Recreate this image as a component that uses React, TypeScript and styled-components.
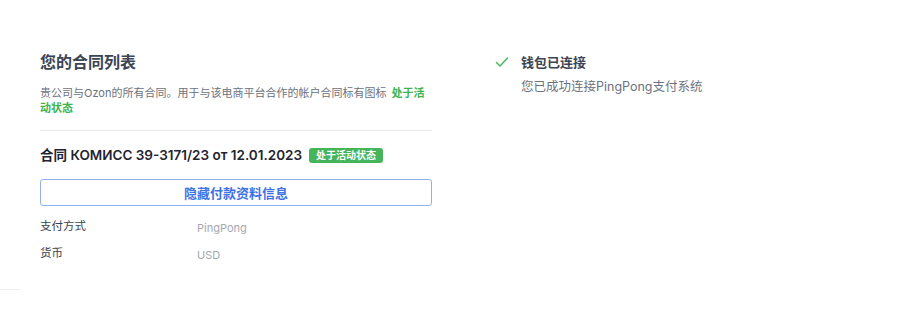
import styled, { createGlobalStyle } from "styled-components";

const GlobalStyle = createGlobalStyle`
    body {
        margin: 0;
        background: #ffffff;
        font-family: Inter, "Noto Sans CJK SC", sans-serif;
    }
`;

const Page = styled.div`
    width: 913px;
    height: 315px;
    display: flex;
    flex-direction: column;
`;

const Columns = styled.div`
    display: flex;
    gap: 63px;
    padding: 52px 0 0 40px;
`;

const LeftColumn = styled.section`
    width: 392px;
    display: flex;
    flex-direction: column;
`;

const Title = styled.h2`
    margin: 0;
    font-size: 16px;
    line-height: 20px;
    font-weight: 700;
    color: #3b4452;
`;

const Description = styled.p`
    margin: 14px 0 0;
    font-size: 11px;
    line-height: 15px;
    color: #6b7280;
`;

const ActiveText = styled.span`
    color: #3fb34f;
    font-weight: 600;
    margin-left: 5px;
`;

const Divider = styled.hr`
    margin: 14px 0 0;
    border: none;
    border-top: 1px solid #e6e8ec;
`;

const ContractHeader = styled.div`
    display: flex;
    align-items: center;
    gap: 7px;
    margin-top: 15px;
`;

const ContractTitle = styled.h3`
    margin: 0;
    font-size: 13.5px;
    line-height: 18px;
    font-weight: 600;
    color: #1f2430;
`;

const Badge = styled.span`
    background: #45b45a;
    color: #ffffff;
    font-size: 10px;
    font-weight: 600;
    line-height: 15px;
    padding: 0 7px;
    border-radius: 3px;
`;

const ToggleButton = styled.button`
    margin-top: 15px;
    height: 27px;
    width: 100%;
    background: #ffffff;
    border: 1px solid #8fb1f2;
    border-radius: 3px;
    color: #3e72e4;
    font-family: inherit;
    font-size: 13px;
    font-weight: 600;
    cursor: pointer;
`;

const InfoList = styled.dl`
    margin: 12px 0 0;
    display: grid;
    grid-template-columns: 157px 1fr;
    row-gap: 9px;
`;

const InfoLabel = styled.dt`
    font-size: 11.5px;
    line-height: 16px;
    color: #3b4452;
`;

const InfoValue = styled.dd`
    margin: 0;
    font-size: 11px;
    line-height: 16px;
    color: #a3a8b0;
    padding-top: 2px;
`;

const RightColumn = styled.section`
    display: flex;
    gap: 12px;
    padding-top: 1px;
`;

const CheckIcon = styled.svg`
    width: 14px;
    height: 14px;
    margin-top: 2px;
`;

const StatusBody = styled.div`
    display: flex;
    flex-direction: column;
    gap: 7px;
`;

const StatusTitle = styled.div`
    font-size: 13px;
    line-height: 18px;
    font-weight: 700;
    color: #3b4452;
`;

const StatusText = styled.div`
    font-size: 12.5px;
    line-height: 18px;
    color: #6b7280;
`;

const FooterLine = styled.div`
    margin-top: 26px;
    width: 21px;
    border-top: 1px solid #eef0f2;
`;

const App = () => {
    return (
        <>
            <GlobalStyle />
            <Page>
                <Columns>
                    <LeftColumn>
                        <Title>您的合同列表</Title>
                        <Description>
                            贵公司与Ozon的所有合同。用于与该电商平台合作的帐户合同标有图标
                            <ActiveText>处于活动状态</ActiveText>
                        </Description>
                        <Divider />
                        <ContractHeader>
                            <ContractTitle>合同 КОМИСС 39-3171/23 от 12.01.2023</ContractTitle>
                            <Badge>处于活动状态</Badge>
                        </ContractHeader>
                        <ToggleButton>隐藏付款资料信息</ToggleButton>
                        <InfoList>
                            <InfoLabel>支付方式</InfoLabel>
                            <InfoValue>PingPong</InfoValue>
                            <InfoLabel>货币</InfoLabel>
                            <InfoValue>USD</InfoValue>
                        </InfoList>
                    </LeftColumn>
                    <RightColumn>
                        <CheckIcon viewBox="0 0 14 14" fill="none">
                            <path d="M1.5 7.5 L5 11 L12.5 3" stroke="#4cba61" strokeWidth="1.6" strokeLinecap="round" strokeLinejoin="round" />
                        </CheckIcon>
                        <StatusBody>
                            <StatusTitle>钱包已连接</StatusTitle>
                            <StatusText>您已成功连接PingPong支付系统</StatusText>
                        </StatusBody>
                    </RightColumn>
                </Columns>
                <FooterLine />
            </Page>
        </>
    );
};

export default App;
